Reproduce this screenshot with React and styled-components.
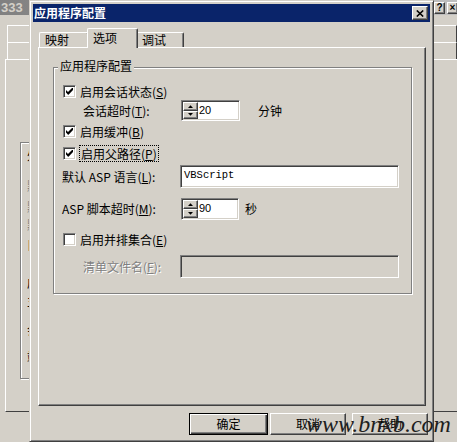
import React from 'react';
import styled, { createGlobalStyle, css } from 'styled-components';

const GlobalStyle = createGlobalStyle`
  html, body { margin: 0; padding: 0; }
  body {
    background: #d4d0c8;
    font-family: "Noto Sans CJK SC", "Noto Sans", sans-serif;
    font-size: 12px;
    line-height: 14px;
    color: #000;
  }
`;

const raised = css`
  border: 1px solid;
  border-color: #fff #404040 #404040 #fff;
  box-shadow: inset -1px -1px #808080;
  background: #d4d0c8;
`;

const sunken = css`
  border: 1px solid;
  border-color: #808080 #fff #fff #808080;
  box-shadow: inset 1px 1px #404040, inset -1px -1px #d4d0c8;
`;

const etched = css`
  border: 1px solid #808080;
  box-shadow: inset 1px 1px #fff, 1px 1px #fff;
`;

const Desktop = styled.div`
  position: relative;
  width: 457px;
  height: 442px;
  overflow: hidden;
  background: #d4d0c8;
`;

/* window behind the dialog */
const BackWindow = styled.div`
  position: absolute;
  left: -4px;
  top: -4px;
  width: 468px;
  height: 470px;
  box-sizing: border-box;
  padding: 4px;
  background: #d4d0c8;
  display: flex;
  flex-direction: column;
`;

const BackTitle = styled.div`
  height: 15px;
  flex: none;
  display: flex;
  align-items: center;
  padding: 0 2px 0 1px;
  background: linear-gradient(to right, #808080, #c0c0c0);
  color: #d4d0c8;
  font: bold 13px/15px "Liberation Sans", Arial, sans-serif;
`;

const CapButton = styled.div`
  ${raised};
  box-sizing: border-box;
  width: 11px;
  height: 12px;
  margin-left: ${p => (p.$first ? 'auto' : '2px')};
  display: flex;
  align-items: center;
  justify-content: center;
  color: #000;
  font: bold 10px/10px "Liberation Sans", Arial, sans-serif;
`;

const BackBody = styled.div`
  padding: 10px 0 0 7px;
`;

const BackBar = styled.div`
  box-sizing: border-box;
  width: 450px;
  height: 17px;
  border-top: 1px solid #fff;
  border-left: 1px solid #fff;
  border-right: 1px solid #404040;
`;

const BackPanel = styled.div`
  box-sizing: border-box;
  margin-left: -2px;
  width: 470px;
  height: 353px;
  border-top: 1px solid #fff;
  border-left: 1px solid #fff;
  border-bottom: 1px solid #404040;
  padding: 82px 0 0 14px;
`;

const BackGroup = styled.div`
  ${etched};
  box-sizing: border-box;
  width: 400px;
  height: 237px;
  padding-left: 6px;
  display: flex;
  flex-direction: column;
`;

const BackLabel = styled.div`
  margin-top: ${p => p.$mt}px;
  color: ${p => (p.$muted ? '#808080' : '#000')};
`;

/* front dialog */
const Dialog = styled.div`
  position: absolute;
  left: 29px;
  top: 0;
  width: 405px;
  height: 442px;
  box-sizing: border-box;
  display: flex;
  flex-direction: column;
  background: #d4d0c8;
  border: 1px solid;
  border-color: #d4d0c8 #404040 #404040 #d4d0c8;
  box-shadow: inset 1px 1px #fff, inset -1px -1px #808080;
  padding: 3px;
`;

const TitleBar = styled.div`
  height: 18px;
  flex: none;
  display: flex;
  align-items: center;
  justify-content: space-between;
  padding: 0 2px 0 1px;
  background: #0a246a;
  color: #fff;
  font-weight: bold;
`;

const CloseButton = styled.div`
  ${raised};
  box-sizing: border-box;
  width: 16px;
  height: 14px;
  display: flex;
  align-items: center;
  justify-content: center;
`;

const DialogBody = styled.div`
  padding: 6px 4px 0 5px;
  display: flex;
  flex-direction: column;
`;

const TabStrip = styled.div`
  height: 19px;
  display: flex;
  align-items: flex-end;
  padding-left: 1px;
`;

const Tab = styled.div`
  flex: none;
  box-sizing: border-box;
  position: relative;
  width: ${p => p.$w}px;
  height: ${p => (p.$active ? 20 : 15)}px;
  margin: ${p => (p.$active ? '0 -2px -1px' : '0')};
  padding: ${p => (p.$active ? '2px 0 0 5px' : '0 0 0 5px')};
  z-index: ${p => (p.$active ? 1 : 0)};
  background: #d4d0c8;
  border-top: 1px solid #fff;
  border-left: 1px solid #fff;
  border-right: 1px solid #404040;
  box-shadow: inset -1px 0 #808080;
  border-radius: 2px 2px 0 0;
`;

const Panel = styled.div`
  box-sizing: border-box;
  height: 359px;
  border: 1px solid;
  border-color: #fff #404040 #404040 #fff;
  box-shadow: inset -1px -1px #808080;
  padding: 19px 0 0 14px;
`;

const GroupBox = styled.div`
  ${etched};
  position: relative;
  box-sizing: border-box;
  width: 359px;
  padding: 0 0 15px 9px;
`;

const Legend = styled.span`
  position: absolute;
  top: -9px;
  left: 4px;
  padding: 0 2px;
  background: #d4d0c8;
`;

const Row = styled.div`
  display: flex;
  align-items: center;
  height: ${p => p.$h}px;
  margin-top: ${p => p.$mt}px;
`;

const CheckBox = styled.div`
  ${sunken};
  flex: none;
  box-sizing: border-box;
  width: 13px;
  height: 13px;
  background: #fff;
  display: flex;
  align-items: center;
  justify-content: center;
`;

const CheckLabel = styled.span`
  margin-left: ${p => (p.$focused ? 3 : 4)}px;
  white-space: nowrap;
  ${p =>
    p.$focused &&
    css`
      border: 1px dotted #000;
      padding: 0 1px;
      line-height: 15px;
    `}
`;

const FieldLabel = styled.span`
  flex: none;
  width: ${p => p.$w}px;
  margin-left: ${p => p.$indent || 0}px;
  white-space: nowrap;
  color: ${p => (p.$disabled ? '#808080' : '#000')};
  text-shadow: ${p => (p.$disabled ? '1px 1px 0 #fff' : 'none')};
`;

const SpinBox = styled.div`
  ${sunken};
  flex: none;
  box-sizing: border-box;
  width: ${p => p.$w}px;
  height: ${p => p.$h}px;
  padding: 1px;
  background: #fff;
  display: flex;
`;

const UpDown = styled.div`
  width: 15px;
  display: flex;
  flex-direction: column;
`;

const SpinButton = styled.div`
  ${raised};
  flex: 1;
  display: flex;
  align-items: center;
  justify-content: center;
`;

const SpinValue = styled.div`
  flex: 1;
  padding: 1px 0 0 1px;
  font: 11px/14px "Liberation Sans", Arial, sans-serif;
`;

const Unit = styled.span`
  margin-left: ${p => p.$gap}px;
`;

const TextBox = styled.div`
  ${sunken};
  flex: none;
  box-sizing: border-box;
  width: 219px;
  height: 23px;
  padding: 2px 0 0 3px;
  align-self: flex-start;
  background: ${p => (p.$disabled ? '#d4d0c8' : '#fff')};
  font: 10.5px/14px "Liberation Mono", "Courier New", monospace;
`;

const ButtonRow = styled.div`
  display: flex;
  justify-content: flex-end;
  margin: 7px -2px 0 0;
`;

const PushButton = styled.div`
  box-sizing: border-box;
  width: ${p => p.$w}px;
  height: 22px;
  margin-left: ${p => p.$ml || 0}px;
  display: flex;
  align-items: center;
  justify-content: center;
  ${p =>
    p.$default
      ? css`
          border: 1px solid #000;
          box-shadow: inset 1px 1px #fff, inset -1px -1px #404040, inset -2px -2px #808080;
          background: #d4d0c8;
        `
      : raised};
`;

const Watermark = styled.div`
  position: absolute;
  left: 306px;
  top: 412px;
  z-index: 2;
  font: italic 24px/24px "Liberation Serif", "Times New Roman", serif;
  color: #1e1e1e;
  white-space: nowrap;
`;

const CheckMark = () => (
  <svg width="7" height="7" viewBox="0 0 7 7">
    <polygon points="0,2 2,4 6,0 7,0 7,2 2.5,6.8 2,6.8 0,4.6" fill="#000" />
  </svg>
);

const Arrow = ({ up }) => (
  <svg width="5" height="3" viewBox="0 0 5 3">
    <polygon points={up ? '0,3 5,3 2.5,0.3' : '0,0 5,0 2.5,2.7'} fill="#000" />
  </svg>
);

const Spinner = ({ value, w, h }) => (
  <SpinBox $w={w} $h={h}>
    <UpDown>
      <SpinButton><Arrow up /></SpinButton>
      <SpinButton><Arrow /></SpinButton>
    </UpDown>
    <SpinValue>{value}</SpinValue>
  </SpinBox>
);

const Check = ({ checked, label, hotkey, mt, focused }) => (
  <Row $h={focused ? 17 : 13} $mt={mt}>
    <CheckBox>{checked && <CheckMark />}</CheckBox>
    <CheckLabel $focused={focused}>
      {label}(<u>{hotkey}</u>)
    </CheckLabel>
  </Row>
);

const backLabels = [
  { t: '处理', mt: 5 },
  { t: '默认', mt: 17, muted: true },
  { t: '默认', mt: 7, muted: true },
  { t: '默认', mt: 4, muted: true },
  { t: '目录', mt: 6 },
  { t: '应用', mt: 24 },
  { t: '主页', mt: 4 },
  { t: '会话', mt: 15 },
  { t: '端口', mt: 13 },
];

export default function App() {
  return (
    <Desktop>
      <GlobalStyle />

      <BackWindow>
        <BackTitle>
          333
          <CapButton $first>?</CapButton>
          <CapButton>×</CapButton>
        </BackTitle>
        <BackBody>
          <BackBar />
          <BackBar />
          <BackPanel>
            <BackGroup>
              {backLabels.map((l, i) => (
                <BackLabel key={i} $mt={l.mt} $muted={l.muted}>{l.t}</BackLabel>
              ))}
            </BackGroup>
          </BackPanel>
        </BackBody>
      </BackWindow>

      <Dialog>
        <TitleBar>
          应用程序配置
          <CloseButton>
            <svg width="8" height="7" viewBox="0 0 8 7">
              <path d="M0.8 0.5 L7.2 6.5 M7.2 0.5 L0.8 6.5" stroke="#000" strokeWidth="1.6" />
            </svg>
          </CloseButton>
        </TitleBar>

        <DialogBody>
          <TabStrip>
            <Tab $w={50}>映射</Tab>
            <Tab $w={51} $active>选项</Tab>
            <Tab $w={48}>调试</Tab>
          </TabStrip>

          <Panel>
            <GroupBox>
              <Legend>应用程序配置</Legend>

              <Check checked label="启用会话状态" hotkey="S" mt={17} />

              <Row $h={21} $mt={2}>
                <FieldLabel $indent={20} $w={98}>会话超时(<u>T</u>):</FieldLabel>
                <Spinner value="20" w={59} h={21} />
                <Unit $gap={18}>分钟</Unit>
              </Row>

              <Check checked label="启用缓冲" hotkey="B" mt={4} />
              <Check checked focused label="启用父路径" hotkey="P" mt={7} />

              <Row $h={23} $mt={3}>
                <FieldLabel $indent={-1} $w={118}>默认 ASP 语言(<u>L</u>):</FieldLabel>
                <TextBox>VBScript</TextBox>
              </Row>

              <Row $h={22} $mt={10}>
                <FieldLabel $indent={-1} $w={119}>ASP 脚本超时(<u>M</u>):</FieldLabel>
                <Spinner value="90" w={58} h={22} />
                <Unit $gap={6}>秒</Unit>
              </Row>

              <Check label="启用并排集合" hotkey="E" mt={13} />

              <Row $h={23} $mt={9}>
                <FieldLabel $indent={20} $w={97} $disabled>清单文件名(<u>F</u>):</FieldLabel>
                <TextBox $disabled />
              </Row>
            </GroupBox>
          </Panel>

          <ButtonRow>
            <PushButton $default $w={79}>确定</PushButton>
            <PushButton $w={76} $ml={2}>取消</PushButton>
            <PushButton $w={76} $ml={6}>帮助</PushButton>
          </ButtonRow>
        </DialogBody>
      </Dialog>

      <Watermark>www.bnxb.com</Watermark>
    </Desktop>
  );
}
